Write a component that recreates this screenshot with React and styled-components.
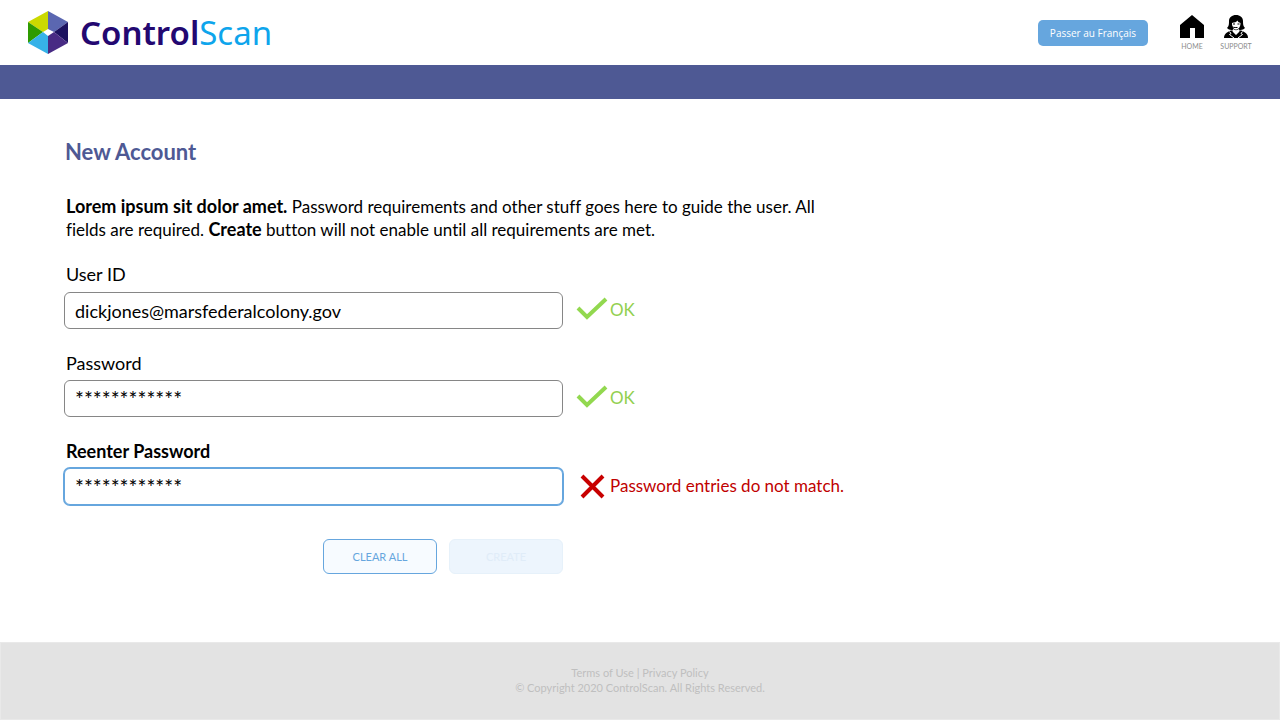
import { useState } from "react";
import styled, { createGlobalStyle } from "styled-components";

const GlobalStyle = createGlobalStyle`
  * {
    box-sizing: border-box;
  }
  body {
    margin: 0;
    background: #ffffff;
    color: #000000;
    font-family: Lato, "Open Sans", sans-serif;
    font-size: 17px;
    line-height: 23px;
    font-variant-ligatures: none;
  }
`;

function LogoMark() {
  return (
    <svg width="41" height="43" viewBox="0 0 41 43" aria-hidden="true">
      <path d="M20 0 L0 11 L15 21 L20 18 Z" fill="#cbd900" />
      <path d="M20 0 L40 11 L26 21 L20 18 Z" fill="#5b67b1" />
      <path d="M0 11 L15 21 L0 32 Z" fill="#2e9b00" />
      <path d="M40 11 L26 21 L40 32 Z" fill="#1c1260" />
      <path d="M0 32 L15 21 L20 25 L20 43 Z" fill="#36b2e8" />
      <path d="M40 32 L26 21 L20 25 L20 43 Z" fill="#482b84" />
    </svg>
  );
}

function HomeIcon() {
  return (
    <svg width="24" height="24" viewBox="0 0 24 24" aria-hidden="true">
      <path d="M12 0 L24 10 V23 H15 V13 H10 V23 H0 V10 Z" />
    </svg>
  );
}

function SupportIcon() {
  return (
    <svg width="24" height="24" viewBox="0 0 24 24" aria-hidden="true">
      <path d="M12 0 C8 0 5 2.500 5 6 C5 9 5 11 3 13 C5 15 7 15 9 15 H15 C17 15 19 15 21 13 C19 11 19 9 19 6 C19 2.500 16 0 12 0 Z" />
      <path
        d="M8 8 C10.500 7.500 12.500 7 13.500 5.500 C14 7 15 7.500 16.500 8 C16.500 12 14.500 14.500 12 14.500 C9.500 14.500 8 12 8 8 Z"
        fill="#ffffff"
      />
      <path d="M9 8.500 h2 v1 h-2 Z M13.500 8.500 h2 v1 h-2 Z M10.500 12 h3.500 l-1 1 h-1.500 Z" />
      <path
        d="M6.500 10 C7 11.500 8.500 12.500 11 12.500"
        fill="none"
        stroke="#000000"
        strokeWidth="1"
      />
      <path d="M7 15.500 C3 17 0 19 0 23 H24 C24 19 21 17 17 15.500 Z" />
      <path
        d="M9 14 L12 15.500 L15 14 L15.500 16.500 L12 20 L8.500 16.500 Z"
        fill="#ffffff"
      />
      <path
        d="M5.500 16.500 L7 18.500 L5.500 19.500 L10 23 M18.500 16.500 L17 18.500 L18.500 19.500 L14 23"
        fill="none"
        stroke="#ffffff"
        strokeWidth="1"
      />
    </svg>
  );
}

function CheckIcon() {
  return (
    <svg width="32" height="24" viewBox="0 0 32 24" aria-hidden="true">
      <path
        d="M2 11 L11 20 L30 2"
        fill="none"
        stroke="#92d84f"
        strokeWidth="4"
      />
    </svg>
  );
}

function CrossIcon() {
  return (
    <svg width="32" height="28" viewBox="0 0 32 28" aria-hidden="true">
      <path
        d="M6 5 L27 26 M27 5 L6 26"
        fill="none"
        stroke="#c80000"
        strokeWidth="4"
      />
    </svg>
  );
}

const fields = [
  {
    id: "userId",
    label: "User ID",
    value: "dickjones@marsfederalcolony.gov",
    status: "OK",
    valid: true,
  },
  {
    id: "password",
    label: "Password",
    value: "************",
    status: "OK",
    valid: true,
    masked: true,
  },
  {
    id: "reenter",
    label: "Reenter Password",
    value: "************",
    status: "Password entries do not match.",
    valid: false,
    active: true,
    masked: true,
  },
];

function Field({ field, value, onChange }) {
  return (
    <StyledField>
      <Label htmlFor={field.id} $active={field.active}>
        {field.label}
      </Label>
      <FieldRow>
        <Input
          id={field.id}
          type="text"
          autoComplete="off"
          spellCheck={false}
          $active={field.active}
          $masked={field.masked}
          value={value}
          onChange={onChange}
        />
        <Status $valid={field.valid}>
          {field.valid ? <CheckIcon /> : <CrossIcon />}
          <span>{field.status}</span>
        </Status>
      </FieldRow>
    </StyledField>
  );
}

function App() {
  const [values, setValues] = useState(
    Object.fromEntries(fields.map((field) => [field.id, field.value]))
  );

  const clearAll = () => setValues({ userId: "", password: "", reenter: "" });

  return (
    <Page>
      <GlobalStyle />
      <Header>
        <Logo href="#">
          <LogoMark />
          <LogoText>
            Control<span>Scan</span>
          </LogoText>
        </Logo>
        <HeaderNav>
          <LanguageButton type="button">Passer au Français</LanguageButton>
          <IconLink href="#home">
            <HomeIcon />
            HOME
          </IconLink>
          <IconLink href="#support">
            <SupportIcon />
            SUPPORT
          </IconLink>
        </HeaderNav>
      </Header>
      <Band />
      <Main>
        <Title>New Account</Title>
        <Intro>
          <b>Lorem ipsum sit dolor amet.</b> Password requirements and other
          stuff goes here to guide the user. All fields are required.{" "}
          <b>Create</b> button will not enable until all requirements are met.
        </Intro>
        <Form onSubmit={(e) => e.preventDefault()}>
          {fields.map((field) => (
            <Field
              key={field.id}
              field={field}
              value={values[field.id]}
              onChange={(e) =>
                setValues({ ...values, [field.id]: e.target.value })
              }
            />
          ))}
          <Actions>
            <Button type="button" onClick={clearAll}>
              CLEAR ALL
            </Button>
            <Button type="submit" disabled>
              CREATE
            </Button>
          </Actions>
        </Form>
      </Main>
      <Footer>
        <div>
          <a href="#terms">Terms of Use</a> | <a href="#privacy">Privacy Policy</a>
        </div>
        <div>© Copyright 2020 ControlScan. All Rights Reserved.</div>
      </Footer>
    </Page>
  );
}

const Page = styled.div`
  min-height: 100vh;
  display: flex;
  flex-direction: column;
`;

const Header = styled.header`
  height: 65px;
  padding: 0 28px;
  display: flex;
  align-items: center;
  justify-content: space-between;
`;

const Logo = styled.a`
  display: flex;
  align-items: center;
  gap: 11px;
  text-decoration: none;
`;

const LogoText = styled.span`
  font-family: "Noto Sans", sans-serif;
  font-size: 33px;
  line-height: 43px;
  font-weight: 600;
  color: #230871;
  span {
    font-weight: 400;
    color: #0ea5ec;
  }
`;

const HeaderNav = styled.nav`
  display: flex;
  align-items: center;
  gap: 12px;
`;

const LanguageButton = styled.button`
  width: 110px;
  height: 26px;
  margin-right: 16px;
  padding: 0;
  border: none;
  border-radius: 5px;
  background: #66a6de;
  color: #ffffff;
  font-family: "Open Sans", sans-serif;
  font-size: 10px;
  white-space: nowrap;
`;

const IconLink = styled.a`
  width: 32px;
  display: flex;
  flex-direction: column;
  align-items: center;
  gap: 3px;
  color: #8c8c8c;
  font-size: 7px;
  line-height: 8px;
  text-decoration: none;
  svg {
    fill: #000000;
  }
`;

const Band = styled.div`
  height: 34px;
  background: #4e5994;
`;

const Main = styled.main`
  flex: 1;
  padding: 38px 64px 40px;
`;

const Title = styled.h1`
  margin: 0 0 28px;
  padding-left: 1px;
  color: #4e5994;
  font-size: 22px;
  line-height: 30px;
`;

const Intro = styled.p`
  max-width: 780px;
  margin: 0 0 22px;
  padding-left: 2px;
  b {
    font-size: 18px;
  }
`;

const Form = styled.form`
  display: flex;
  flex-direction: column;
  gap: 23px;
`;

const StyledField = styled.div`
  display: flex;
  flex-direction: column;
  gap: 6px;
  & + & {
    gap: 5px;
  }
`;

const Label = styled.label`
  padding-left: 2px;
  font-size: 18px;
  font-weight: ${({ $active }) => ($active ? 700 : 400)};
`;

const FieldRow = styled.div`
  display: flex;
  gap: 13px;
`;

const Input = styled.input`
  width: 100%;
  max-width: 499px;
  height: 37px;
  padding: 0 10px;
  border: 1px solid ${({ $active }) => ($active ? "#66a6de" : "#868686")};
  border-radius: 6px;
  box-shadow: ${({ $active }) => ($active ? "0 0 0 1px #66a6de" : "none")};
  background: #ffffff;
  color: #000000;
  font-family: inherit;
  font-size: ${({ $masked }) => ($masked ? "21px" : "18px")};
  outline: none;
`;

const Status = styled.div`
  height: 34px;
  display: flex;
  align-items: center;
  gap: 2px;
  white-space: nowrap;
  color: ${({ $valid }) => ($valid ? "#92d050" : "#c00000")};
`;

const Actions = styled.div`
  max-width: 499px;
  margin-top: 11px;
  display: flex;
  justify-content: flex-end;
  gap: 12px;
`;

const Button = styled.button`
  width: 114px;
  height: 35px;
  padding: 0;
  border: 1px solid #66a6de;
  border-radius: 6px;
  background: #f7fbff;
  color: #66a6de;
  font-family: inherit;
  font-size: 11px;
  &:disabled {
    border-color: #e6f1fa;
    background: #edf5fd;
    color: #e0ecf8;
  }
`;

const Footer = styled.footer`
  min-height: 78px;
  padding: 22px 20px;
  border: 1px solid #e9e9e9;
  background: #e3e3e3;
  color: #bfbfbf;
  font-size: 11px;
  line-height: 15px;
  text-align: center;
  a {
    color: inherit;
    text-decoration: none;
  }
`;

export default App;
